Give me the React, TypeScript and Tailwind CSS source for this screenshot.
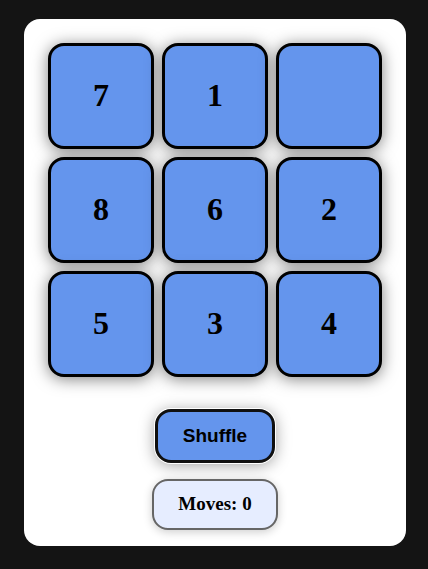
import { useState } from "react";

const START = [7, 1, 0, 8, 6, 2, 5, 3, 4];

export default function App() {
  const [tiles, setTiles] = useState<number[]>(START);
  const [moves, setMoves] = useState(0);

  const move = (index: number) => {
    const empty = tiles.indexOf(0);
    const distance =
      Math.abs((index % 3) - (empty % 3)) +
      Math.abs(Math.floor(index / 3) - Math.floor(empty / 3));
    if (distance !== 1) return;
    const next = [...tiles];
    next[empty] = tiles[index];
    next[index] = 0;
    setTiles(next);
    setMoves(moves + 1);
  };

  // Random legal moves keep the puzzle solvable.
  const shuffle = () => {
    const next = [...tiles];
    for (let i = 0; i < 200; i++) {
      const empty = next.indexOf(0);
      const options = [empty - 3, empty + 3];
      if (empty % 3 > 0) options.push(empty - 1);
      if (empty % 3 < 2) options.push(empty + 1);
      const legal = options.filter((n) => n >= 0 && n < 9);
      const pick = legal[Math.floor(Math.random() * legal.length)];
      next[empty] = next[pick];
      next[pick] = 0;
    }
    setTiles(next);
    setMoves(0);
  };

  return (
    <div className="flex min-h-screen items-center justify-center bg-[#141414] pb-1 pl-0.5 font-['Liberation_Serif','Times_New_Roman',serif] text-black">
      <main className="flex flex-col items-center rounded-2xl bg-white px-6 pt-6 pb-4">
        <div className="grid grid-cols-3 gap-2">
          {tiles.map((tile, index) => (
            <button
              key={tile}
              type="button"
              aria-label={tile === 0 ? "Empty square" : undefined}
              onClick={() => move(index)}
              className="size-[106px] rounded-2xl border-3 border-black bg-[#6495ed] pb-0.5 text-[32px] font-bold shadow-[0_2px_16px_rgba(0,0,0,0.5)]"
            >
              {tile === 0 ? "" : tile}
            </button>
          ))}
        </div>
        <button
          type="button"
          onClick={shuffle}
          className="mt-8 h-[54px] rounded-2xl border-3 border-[#101010] bg-[#6495ed] px-[25px] font-['Liberation_Sans',Arial,sans-serif] text-[19px] font-bold shadow-[0_0_0_1px_#fff,0_2px_16px_rgba(0,0,0,0.4)]"
        >
          Shuffle
        </button>
        <p className="mt-4 flex h-[51px] items-center rounded-2xl border-2 border-[#666] bg-[#e6edff] px-6 text-[19px] font-bold shadow-[0_2px_10px_rgba(0,0,0,0.2)]">
          Moves: {moves}
        </p>
      </main>
    </div>
  );
}
